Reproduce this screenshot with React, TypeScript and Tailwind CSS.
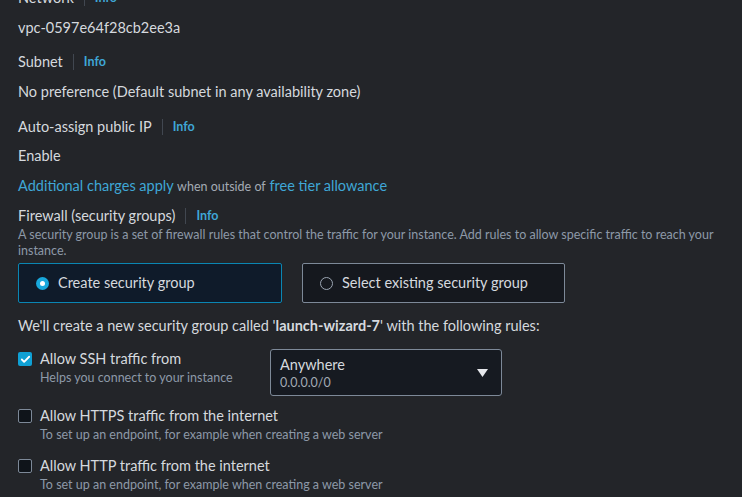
import { Check } from "lucide-react";

const font = { fontFamily: "Lato, 'Liberation Sans', Arial, sans-serif" };

const FieldLabel = ({ text }: { text: string }) => (
  <div className="flex items-center h-[22px] text-[14.5px] text-[#d5d9de]">
    <span>{text}</span>
    <span className="mx-[10px] h-[16px] w-px bg-[#414750]"></span>
    <span className="text-[12.5px] font-bold text-[#3fa7d6]">Info</span>
  </div>
);

const Value = ({ children }: { children: React.ReactNode }) => (
  <div className="h-[22px] leading-[22px] text-[14.5px] text-[#d5d9de]">{children}</div>
);

const Checkbox = ({ checked }: { checked?: boolean }) =>
  checked ? (
    <span className="mt-[4px] flex h-[14px] w-[14px] shrink-0 items-center justify-center rounded-[2px] bg-[#0fa0d4]">
      <Check className="h-[11px] w-[11px] text-white" strokeWidth={4} />
    </span>
  ) : (
    <span className="mt-[4px] h-[14px] w-[14px] shrink-0 rounded-[2px] border border-[#7d8998] bg-[#0f141a]"></span>
  );

const Rule = ({ title, sub, checked }: { title: string; sub: string; checked?: boolean }) => (
  <div className="flex gap-[8px]">
    <Checkbox checked={checked} />
    <div>
      <div className="h-[22px] leading-[22px] text-[14.5px] text-[#d5d9de]">{title}</div>
      <div className="h-[16px] leading-[16px] text-[12.5px] text-[#8d99a8]">{sub}</div>
    </div>
  </div>
);

export default function App() {
  return (
    <div className="h-[497px] w-[742px] overflow-hidden bg-[#232529]" style={font}>
      <div className="-mt-[13px] flex w-[722px] flex-col pl-[18px]">
        <FieldLabel text="Network" />
        <div className="mt-[8px]"><Value>vpc-0597e64f28cb2ee3a</Value></div>

        <div className="mt-[12px]"><FieldLabel text="Subnet" /></div>
        <div className="mt-[8px]"><Value>No preference (Default subnet in any availability zone)</Value></div>

        <div className="mt-[13px]"><FieldLabel text="Auto-assign public IP" /></div>
        <div className="mt-[7px]"><Value>Enable</Value></div>

        <div className="mt-[8px] h-[22px] leading-[22px] text-[14.5px] text-[#3fa7d6]">
          Additional charges apply <span className="text-[12.5px] text-[#a4abb4]">when outside of</span> free tier allowance
        </div>

        <div className="mt-[8px]"><FieldLabel text="Firewall (security groups)" /></div>
        <p className="text-[12.5px] leading-[16px] text-[#8d99a8]">
          A security group is a set of firewall rules that control the traffic for your instance. Add rules to allow specific traffic to reach your instance.
        </p>

        <div className="mt-[4px] flex gap-[20px]">
          <div className="flex h-[40px] w-[264px] items-center gap-[9px] rounded-[2px] border border-[#0a86b3] bg-[#0f1b2a] pl-[17px]">
            <span className="flex h-[13px] w-[13px] items-center justify-center rounded-full bg-[#18a8dc]">
              <span className="h-[5px] w-[5px] rounded-full bg-white"></span>
            </span>
            <span className="text-[14.5px] text-[#d5d9de]">Create security group</span>
          </div>
          <div className="flex h-[40px] w-[263px] items-center gap-[9px] rounded-[2px] border border-[#7d8998] bg-[#15181e] pl-[17px]">
            <span className="h-[13px] w-[13px] rounded-full border border-[#9ba5b2]"></span>
            <span className="text-[14.5px] text-[#d5d9de]">Select existing security group</span>
          </div>
        </div>

        <div className="mt-[12px] h-[22px] leading-[22px] text-[14.5px] text-[#d5d9de]">
          We'll create a new security group called '<span className="font-bold">launch-wizard-7</span>' with the following rules:
        </div>

        <div className="mt-[11px] flex">
          <div className="w-[252px]">
            <Rule checked title="Allow SSH traffic from" sub="Helps you connect to your instance" />
          </div>
          <div className="mt-[1px] flex h-[47px] w-[232px] items-center justify-between rounded-[3px] border border-[#7d8998] bg-[#161a21] pl-[9px] pr-[12px]">
            <div>
              <div className="h-[20px] leading-[20px] text-[14.5px] text-[#d5d9de]">Anywhere</div>
              <div className="h-[16px] leading-[16px] text-[12.5px] text-[#a4abb4]">0.0.0.0/0</div>
            </div>
            <svg width="11" height="8" viewBox="0 0 11 8" className="mr-[1px]">
              <path d="M0 0 H11 L5.5 8 Z" fill="#e5e7eb" />
            </svg>
          </div>
        </div>

        <div className="mt-[9px]">
          <Rule title="Allow HTTPS traffic from the internet" sub="To set up an endpoint, for example when creating a web server" />
        </div>
        <div className="mt-[12px]">
          <Rule title="Allow HTTP traffic from the internet" sub="To set up an endpoint, for example when creating a web server" />
        </div>
      </div>
    </div>
  );
}
